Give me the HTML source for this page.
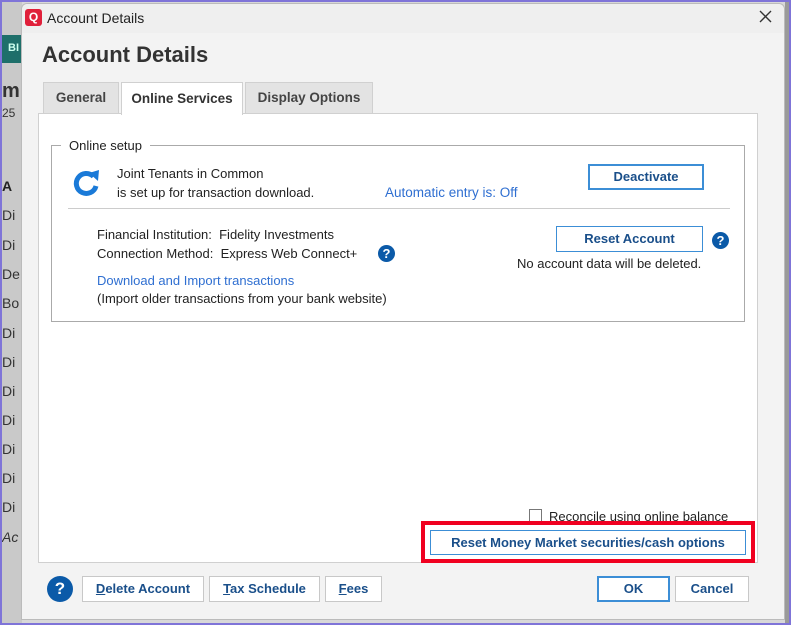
<!DOCTYPE html>
<html><head><style>
*{margin:0;padding:0;box-sizing:border-box}
body{width:791px;height:625px;overflow:hidden;background:#d8d8d8;font-family:"Liberation Sans",sans-serif;font-size:13px;color:#222;position:relative}
.a{position:absolute}
.bg{left:0;top:0;width:791px;height:625px;border:2px solid #7f74d8}
.btn{position:absolute;background:#fff;border:1px solid #c8c8c8;text-align:center;font-size:13px;color:#1a4f8a;font-weight:bold}
.bb{border:2px solid #3c8ed6}
.lk{color:#2f6fd1}
.q{position:absolute;width:17px;height:17px;border-radius:50%;background:#0b5aa8;color:#fff;font-weight:bold;font-size:13px;text-align:center;line-height:17px}
.row{position:absolute;left:2px;font-size:14px;color:#333}
</style></head><body>
<div class="a" style="left:0;top:0;width:22px;height:625px;background:#c9c9c9"></div>
<div class="a" style="left:2px;top:35px;width:20px;height:28px;background:#1e6f6a;color:#cfe;font-size:11px;font-weight:bold;padding:7px 0 0 6px">BI</div>
<div class="a" style="left:2px;top:80px;font-size:20px;font-weight:bold;color:#333">m</div>
<div class="a" style="left:2px;top:106px;font-size:12px;color:#333">25</div>
<div class="a" style="left:2px;top:178px;font-size:14px;font-weight:bold;color:#222">A</div>
<div class="row" style="top:207px">Di</div><div class="row" style="top:237px">Di</div><div class="row" style="top:266px">De</div><div class="row" style="top:295px">Bo</div><div class="row" style="top:325px">Di</div><div class="row" style="top:354px">Di</div><div class="row" style="top:383px">Di</div><div class="row" style="top:412px">Di</div><div class="row" style="top:441px">Di</div><div class="row" style="top:470px">Di</div><div class="row" style="top:499px">Di</div>
<div class="row" style="top:529px;font-style:italic">Ac</div>
<div class="a" style="left:785px;top:0;width:6px;height:625px;background:#9a9a9a"></div>
<div class="a" style="left:21px;top:3px;width:764px;height:617px;background:#f3f3f3;border:1px solid #bbb;border-radius:6px 6px 0 0"></div>
<div class="a" style="left:22px;top:4px;width:762px;height:29px;background:#efefef;border-radius:6px 6px 0 0"></div>
<div class="a" style="left:25px;top:9px;width:17px;height:17px;background:#e0203a;border-radius:3px;color:#fff;font-weight:bold;font-size:12px;text-align:center;line-height:17px">Q</div>
<div class="a" style="left:47px;top:10px;font-size:14px;color:#222">Account Details</div>
<svg class="a" style="left:759px;top:10px" width="13" height="13"><path d="M1 1L12 12M12 1L1 12" stroke="#333" stroke-width="1.4"/></svg>
<div class="a" style="left:42px;top:42px;font-size:22px;font-weight:bold;color:#333">Account Details</div>
<div class="a" style="left:43px;top:82px;width:76px;height:32px;background:#e3e3e3;border:1px solid #d0d0d0;font-weight:bold;color:#444;text-align:center;line-height:30px;font-size:13.5px">General</div>
<div class="a" style="left:121px;top:82px;width:122px;height:33px;background:#fff;border:1px solid #d0d0d0;border-bottom:none;font-weight:bold;color:#333;text-align:center;line-height:31px;z-index:2;font-size:13.5px">Online Services</div>
<div class="a" style="left:245px;top:82px;width:128px;height:32px;background:#e3e3e3;border:1px solid #d0d0d0;font-weight:bold;color:#444;text-align:center;line-height:30px;font-size:13.5px">Display Options</div>
<div class="a" style="left:38px;top:113px;width:720px;height:450px;background:#fff;border:1px solid #d0d0d0"></div>
<div class="a" style="left:51px;top:145px;width:694px;height:177px;border:1px solid #aaa"></div>
<div class="a" style="left:61px;top:138px;background:#fff;padding:0 8px;font-size:13px">Online setup</div>
<svg class="a" style="left:70px;top:167px" width="32" height="32" viewBox="0 0 32 32"><path d="M23.5 9.5 A10 10 0 1 0 26 19" fill="none" stroke="#1a7ad8" stroke-width="5"/><path d="M19 6 L29 3 L28 14 Z" fill="#1a7ad8"/></svg>
<div class="a" style="left:117px;top:166px">Joint Tenants in Common</div>
<div class="a" style="left:117px;top:185px">is set up for transaction download.</div>
<div class="a lk" style="left:385px;top:185px;font-size:13.5px">Automatic entry is: Off</div>
<div class="btn bb" style="left:588px;top:164px;width:116px;height:26px;line-height:22px">Deactivate</div>
<div class="a" style="left:68px;top:208px;width:662px;height:1px;background:#ccc"></div>
<div class="a" style="left:97px;top:227px">Financial Institution:&nbsp; Fidelity Investments</div>
<div class="a" style="left:97px;top:246px">Connection Method:&nbsp; Express Web Connect+</div>
<div class="q" style="left:378px;top:245px">?</div>
<div class="a lk" style="left:97px;top:273px">Download and Import transactions</div>
<div class="a" style="left:97px;top:291px">(Import older transactions from your bank website)</div>
<div class="btn" style="left:556px;top:226px;width:147px;height:26px;line-height:24px;border-color:#3c8ed6">Reset Account</div>
<div class="q" style="left:712px;top:232px">?</div>
<div class="a" style="left:517px;top:256px">No account data will be deleted.</div>
<div class="a" style="left:529px;top:509px;width:13px;height:13px;border:1px solid #777;background:#fff"></div>
<div class="a" style="left:549px;top:509px;height:12px;overflow:hidden">Reconcile using online balance</div>
<div class="a" style="left:421px;top:521px;width:334px;height:42px;border:4px solid #f00020"></div>
<div class="btn" style="left:430px;top:530px;width:316px;height:25px;line-height:23px;border-color:#3c8ed6">Reset Money Market securities/cash options</div>
<div class="q" style="left:47px;top:576px;width:26px;height:26px;line-height:26px;font-size:17px">?</div>
<div class="btn" style="left:82px;top:576px;width:122px;height:26px;line-height:24px;color:#1a4f8a"><u>D</u>elete Account</div>
<div class="btn" style="left:209px;top:576px;width:111px;height:26px;line-height:24px"><u>T</u>ax Schedule</div>
<div class="btn" style="left:325px;top:576px;width:57px;height:26px;line-height:24px"><u>F</u>ees</div>
<div class="btn bb" style="left:597px;top:576px;width:73px;height:26px;line-height:22px">OK</div>
<div class="btn" style="left:675px;top:576px;width:74px;height:26px;line-height:24px">Cancel</div>
<div class="a bg"></div>
</body></html>
